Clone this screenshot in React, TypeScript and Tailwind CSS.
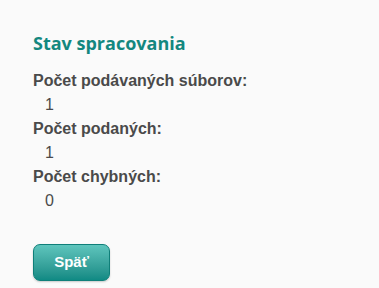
export default function App() {
  const rows = [
    { label: 'Počet podávaných súborov:', value: '1' },
    { label: 'Počet podaných:', value: '1' },
    { label: 'Počet chybných:', value: '0' },
  ];

  return (
    <div className="min-h-[288px] bg-[#fafafa] pl-[33px] pt-[31px] font-['Liberation_Sans',Arial,sans-serif]">
      {/* Nadpis */}
      <h2 className="font-['Open_Sans',sans-serif] text-[18px] font-bold leading-[24px] text-[#13877f]">
        Stav spracovania
      </h2>

      <div className="mt-[14px]">
        {rows.map((row) => (
          <div key={row.label}>
            <div className="text-[16px] font-bold leading-[24px] text-[#4a4a4a]">{row.label}</div>
            <div className="pl-[12px] text-[16px] leading-[24px] text-[#4a4a4a]">{row.value}</div>
          </div>
        ))}
      </div>

      <button
        type="button"
        className="mt-[31px] h-[37px] w-[77px] rounded-[7px] border border-[#0f7f79] bg-gradient-to-b from-[#5ec5bd] to-[#0f8a84] text-[15px] font-bold text-white shadow-[0_1px_2px_rgba(0,0,0,0.2)]"
      >
        Späť
      </button>
    </div>
  );
}
